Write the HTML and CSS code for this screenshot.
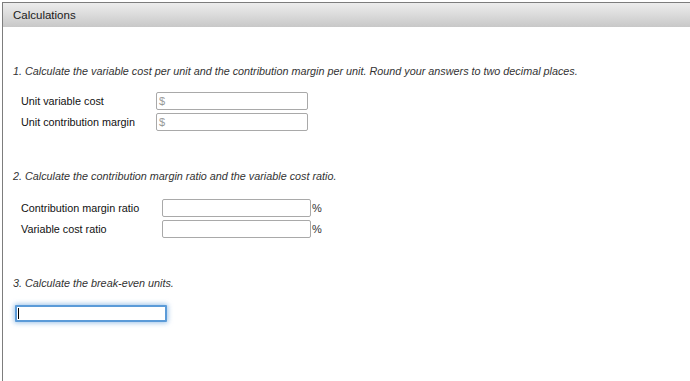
FILE: index.html
```html
<!DOCTYPE html>
<html lang="en">

<head>
  <meta charset="UTF-8">
  <meta name="viewport" content="width=device-width, initial-scale=1.0">
  <title>Calculations</title>
  <link rel="stylesheet" href="styles.css">
</head>

<body>
  <div class="panel">
    <div class="panel_head">Calculations</div>
    <div class="panel_body">
      <p class="question q1">1. Calculate the variable cost per unit and the contribution margin per unit. Round your answers to two decimal places.</p>
      <div class="rows rows_money">
        <div class="row">
          <div class="label">Unit variable cost</div>
          <div class="box"><span class="unit">$</span></div>
        </div>
        <div class="row">
          <div class="label">Unit contribution margin</div>
          <div class="box"><span class="unit">$</span></div>
        </div>
      </div>

      <p class="question">2. Calculate the contribution margin ratio and the variable cost ratio.</p>
      <div class="rows rows_pct">
        <div class="row">
          <div class="label">Contribution margin ratio</div>
          <div class="box"></div>
          <span class="pct">%</span>
        </div>
        <div class="row">
          <div class="label">Variable cost ratio</div>
          <div class="box"></div>
          <span class="pct">%</span>
        </div>
      </div>

      <p class="question">3. Calculate the break-even units.</p>
      <div class="box box_focus"><span class="caret"></span></div>
    </div>
  </div>
</body>

</html>
```

FILE: styles.css
```css
body {
  margin: 0;
  font-family: "Liberation Sans", Arial, sans-serif;
  color: #222;
  background: #fff;
}

/* panel */
.panel {
  margin: 2px 0 0 2px;
  border-top: 1px solid #7d7d7d;
  border-left: 1px solid #7d7d7d;
  height: 378px;
}

.panel_head {
  height: 24px;
  line-height: 24px;
  padding-left: 10px;
  font-size: 11.5px;
  color: #1a1a1a;
  background: linear-gradient(#ededed, #c8c8c8);
}

.panel_body {
  padding: 38px 0 0 10px;
}

/* questions */
.question {
  margin: 39px 0 0;
  font-size: 10.8px;
  line-height: 13px;
  font-style: italic;
  color: #333;
}

.q1 {
  margin-top: 0;
}

.rows {
  margin: 14px 0 0 8px;
  display: flex;
  flex-direction: column;
  gap: 3px;
}

.rows_pct {
  margin-top: 16px;
}

.row {
  display: flex;
  align-items: center;
  height: 18px;
}

.label {
  font-size: 10.8px;
  color: #111;
}

.rows_money .label {
  width: 135px;
}

.rows_pct .label {
  width: 141px;
}

/* inputs */
.box {
  box-sizing: border-box;
  width: 152px;
  height: 18px;
  border: 1px solid #a9a9a9;
  border-radius: 2px;
  background: #fff;
  display: flex;
  align-items: center;
}

.rows_pct .box {
  width: 149px;
}

.unit {
  padding-left: 2px;
  font-size: 11px;
  color: #999;
}

.pct {
  padding-left: 1px;
  font-size: 11px;
  color: #333;
}

.box_focus {
  margin: 15px 0 0 2px;
  height: 17px;
  border: 2px solid #5b9bd8;
  border-radius: 1px;
  box-shadow: 0 0 5px 1px rgba(91, 155, 216, .6);
}

.caret {
  margin-left: 1px;
  width: 1px;
  height: 11px;
  background: #000;
}
```
